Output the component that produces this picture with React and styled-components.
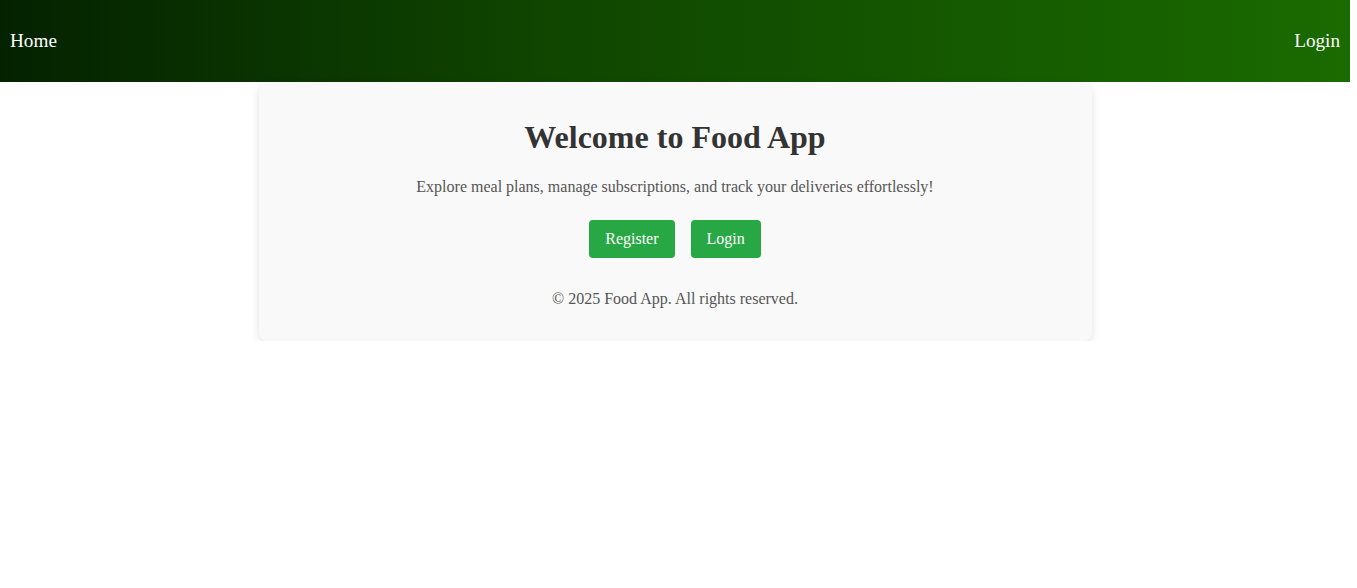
import React from 'react';
import styled, { createGlobalStyle } from 'styled-components';

const GlobalStyle = createGlobalStyle`
  body {
    margin: 0;
    background: #fff;
    font-family: "Liberation Serif", "Times New Roman", serif;
  }
`;

const Page = styled.div`
  width: 1350px;
`;

const NavBar = styled.nav`
  display: flex;
  justify-content: space-between;
  align-items: center;
  height: 82px;
  padding: 0 10px;
  box-sizing: border-box;
  background: linear-gradient(90deg, #042200 0%, #0f4500 40%, #1a6b00 100%);
`;

const NavLink = styled.a`
  color: #fff;
  font-size: 19.2px;
  text-decoration: none;
  cursor: pointer;
`;

const Card = styled.main`
  width: 833px;
  box-sizing: border-box;
  margin: 2px auto 0;
  padding: 14px 20px 17px;
  background: #f9f9f9;
  border-radius: 8px;
  box-shadow: 0 2px 8px rgba(0, 0, 0, 0.12);
  text-align: center;
`;

const Title = styled.h1`
  font-size: 32px;
  color: #333;
  margin: 21.44px 0;
`;

const Text = styled.p`
  font-size: 16px;
  color: #555;
  margin: 16px 0;
`;

const Actions = styled.div`
  display: flex;
  justify-content: center;
  gap: 16px;
  margin-top: 24px;
`;

const Button = styled.button`
  background: #28a745;
  color: #fff;
  border: none;
  border-radius: 4px;
  padding: 10px 16px;
  font-family: inherit;
  font-size: 16px;
  line-height: 18.4px;
  cursor: pointer;
`;

const Footer = styled.footer`
  margin-top: 32px;
  p {
    margin: 0 0 16px;
  }
`;

const App = () => (
  <Page>
    <GlobalStyle />
    <NavBar>
      <NavLink>Home</NavLink>
      <NavLink>Login</NavLink>
    </NavBar>
    <Card>
      <Title>Welcome to Food App</Title>
      <Text>Explore meal plans, manage subscriptions, and track your deliveries effortlessly!</Text>
      <Actions>
        <Button>Register</Button>
        <Button>Login</Button>
      </Actions>
      <Footer>
        <Text>© 2025 Food App. All rights reserved.</Text>
      </Footer>
    </Card>
  </Page>
);

export default App;
